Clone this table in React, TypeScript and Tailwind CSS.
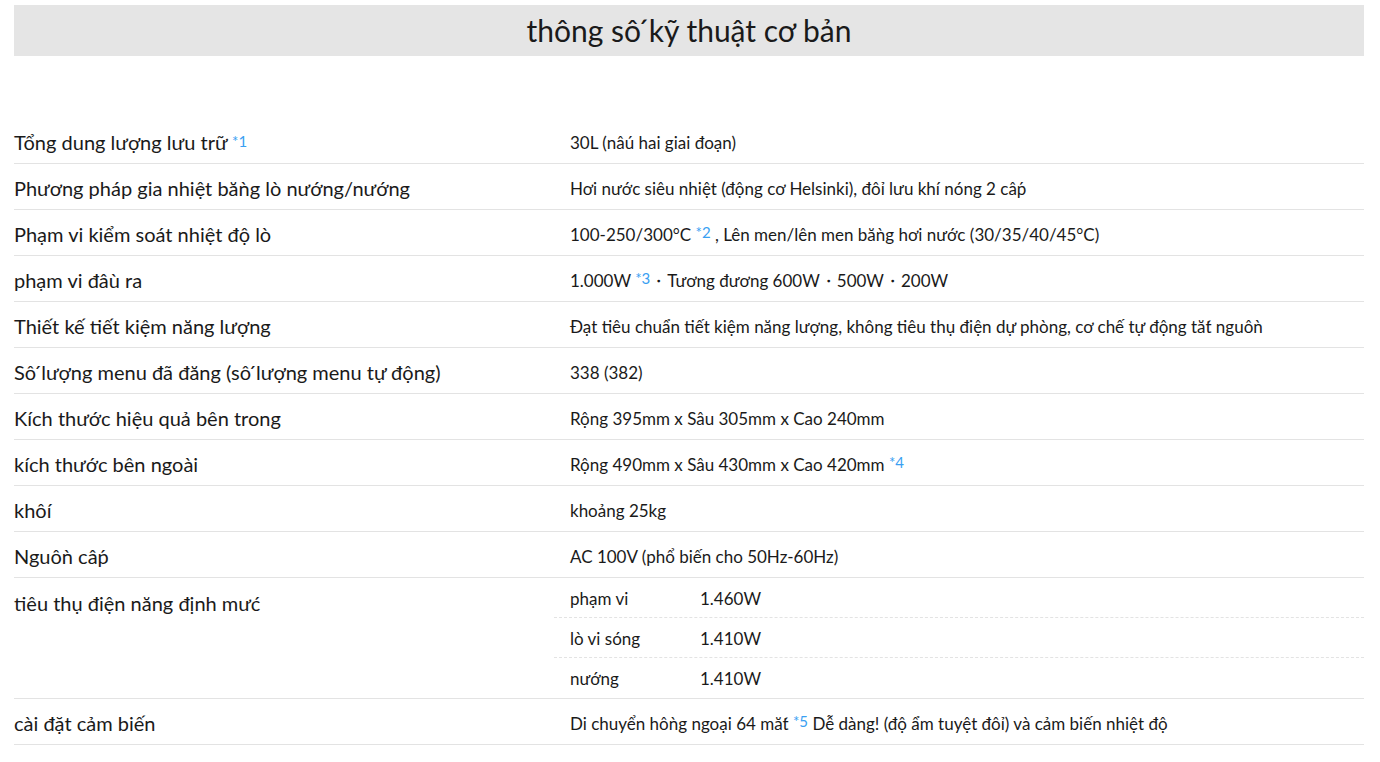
const Sup = ({ n }: { n: number }) => (
  <sup className="text-[15px] text-[#3aa0f2] relative -top-[3px]">*{n}</sup>
)

type Row = { label: React.ReactNode; value: React.ReactNode }

const rows: Row[] = [
  {
    label: (
      <>
        Tổng dung lượng lưu trữ&nbsp;<Sup n={1} />
      </>
    ),
    value: '30L (nâú hai giai đoạn)',
  },
  {
    label: 'Phương pháp gia nhiệt băǹg lò nướng/nướng',
    value: 'Hơi nước siêu nhiệt (động cơ Helsinki), đôỉ lưu khí nóng 2 câṕ',
  },
  {
    label: 'Phạm vi kiểm soát nhiệt độ lò',
    value: (
      <>
        100-250/300°C <Sup n={2} /> , Lên men/lên men băǹg hơi nước (30/35/40/45°C)
      </>
    ),
  },
  {
    label: 'phạm vi đâù ra',
    value: (
      <>
        1.000W <Sup n={3} />・Tương đương 600W・500W・200W
      </>
    ),
  },
  {
    label: 'Thiết kế tiết kiệm năng lượng',
    value: 'Đạt tiêu chuẩn tiết kiệm năng lượng, không tiêu thụ điện dự phòng, cơ chế tự động tăt́ nguôǹ',
  },
  { label: 'Sô ́lượng menu đã đăng (sô ́lượng menu tự động)', value: '338 (382)' },
  { label: 'Kích thước hiệu quả bên trong', value: 'Rộng 395mm x Sâu 305mm x Cao 240mm' },
  {
    label: 'kích thước bên ngoài',
    value: (
      <>
        Rộng 490mm x Sâu 430mm x Cao 420mm <Sup n={4} />
      </>
    ),
  },
  { label: 'khôí', value: 'khoảng 25kg' },
  { label: 'Nguôǹ câṕ', value: 'AC 100V (phổ biến cho 50Hz-60Hz)' },
]

const power = [
  ['phạm vi', '1.460W'],
  ['lò vi sóng', '1.410W'],
  ['nướng', '1.410W'],
]

function Label({ children, className = '' }: { children: React.ReactNode; className?: string }) {
  return <div className={`text-[20px] text-[#1a1a1a] leading-none ${className}`}>{children}</div>
}

export default function App() {
  return (
    <div
      className="min-h-screen bg-white pl-[14px] pr-[16px] pt-[5px] text-[#1a1a1a]"
      style={{ fontFamily: 'Lato, "Noto Sans", sans-serif' }}
    >
      <div className="h-[51px] bg-[#e5e5e5] flex items-center justify-center">
        <h1 className="text-[30px] text-[#1a1a1a] font-normal">thông sô ́kỹ thuật cơ bản</h1>
      </div>

      <div className="mt-[62px]">
        {rows.map((r, i) => (
          <div key={i} className="grid grid-cols-[540px_1fr] h-[46px] items-center border-b border-[#e3e3e3]">
            <Label className="pt-[2px]">{r.label}</Label>
            <div className="pl-4 text-[17px] pt-[4px]">{r.value}</div>
          </div>
        ))}

        <div className="grid grid-cols-[540px_1fr] border-b border-[#e3e3e3]">
          <Label className="pt-[15px]">tiêu thụ điện năng định mưć</Label>
          <div>
            {power.map(([k, v], i) => (
              <div
                key={k}
                className={`flex items-center h-[40px] pl-4 text-[17px] pt-[2px] ${
                  i < power.length - 1 ? 'border-b border-dashed border-[#e3e3e3]' : ''
                }`}
              >
                <span className="w-[130px]">{k}</span>
                <span>{v}</span>
              </div>
            ))}
          </div>
        </div>

        <div className="grid grid-cols-[540px_1fr] h-[46px] items-center border-b border-[#e3e3e3]">
          <Label className="pt-[2px]">cài đặt cảm biến</Label>
          <div className="pl-4 text-[17px] pt-[4px]">
            Di chuyển hôǹg ngoại 64 măt́ <Sup n={5} /> Dễ dàng! (độ ẩm tuyệt đôỉ) và cảm biến nhiệt độ
          </div>
        </div>
      </div>
    </div>
  )
}
